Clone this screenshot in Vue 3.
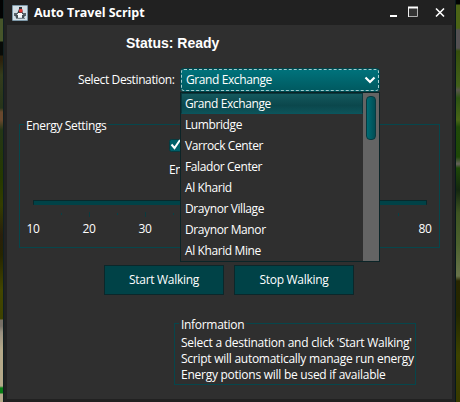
<script setup>
const destinations = [
  'Grand Exchange', 'Lumbridge', 'Varrock Center', 'Falador Center',
  'Al Kharid', 'Draynor Village', 'Draynor Manor', 'Al Kharid Mine',
]
const levels = [10, 20, 30, 80]
const info = [
  "Select a destination and click 'Start Walking'",
  'Script will automatically manage run energy',
  'Energy potions will be used if available',
]
</script>

<template>
  <div class="scene">
    <div class="edge left"></div>
    <div class="window">
      <header class="titlebar">
        <svg class="logo" width="16" height="16" viewBox="0 0 16 16">
          <rect width="16" height="16" rx="1" fill="#7d98a8" />
          <rect x="1" y="1" width="14" height="14" fill="#d3dfe6" />
          <path d="M2 8h3v3H2zM11 8h3v3h-3z" fill="#59636a" />
          <path d="M3 10h3v3H4zM10 10h3l-1 3h-2z" fill="#454e54" />
          <path d="M7 2h3v2l1 5H5l2-5z" fill="#30373c" />
          <path d="M6 8h4v4H6z" fill="#f7f9fa" />
          <rect x="7" y="4" width="3.500" height="3.500" rx="1" fill="#e03633" />
          <path d="M4 13.500h9" stroke="#7b878e" />
        </svg>
        <span class="title">Auto Travel Script</span>
        <svg class="controls" width="57" height="13" viewBox="0 0 57 13">
          <path d="M0 10h7" stroke="#fff" stroke-width="2" />
          <path d="M18.500 1v9.500h9V1" fill="#333" stroke="#b0b0b0" />
          <path d="M18.500 1v10" stroke="#eee" />
          <path d="M18 1.500h10" stroke="#fff" stroke-width="2" />
          <path d="M46 2.500l8 8M54 2.500l-8 8" stroke="#fff" stroke-width="1.600" />
        </svg>
      </header>
      <main class="content">
        <div class="status">Status: Ready</div>
        <div class="destination">
          <label class="caption">Select Destination:</label>
          <div class="combo">
            <div class="face">
              <span>Grand Exchange</span>
              <svg width="12" height="8" viewBox="0 0 12 8">
                <path d="M1.500 1.500L6 6l4.500-4.500" fill="none" stroke="#fff" stroke-width="2.200" />
              </svg>
            </div>
            <div class="popup">
              <ul>
                <li v-for="(name, i) in destinations" :key="name" :class="{ selected: i === 0 }">{{ name }}</li>
              </ul>
              <div class="scrollbar"><div class="thumb"></div></div>
            </div>
          </div>
        </div>
        <section class="group energy">
          <h2>Energy Settings</h2>
          <div class="check">
            <svg width="13" height="13" viewBox="0 0 13 13">
              <rect x=".5" y=".5" width="12" height="12" rx="2" fill="#006069" stroke="#073a3f" />
              <path d="M2.500 5.500l3 3.500L11 1" fill="none" stroke="#fff" stroke-width="2" />
            </svg>
          </div>
          <div class="threshold">En</div>
          <div class="track"></div>
          <svg class="ticks" width="394" height="6" viewBox="0 0 394 6">
            <path d="M28.500 1v2M84.500 1v2M140.500 1v2M365.500 1v3" stroke="#074146" />
            <path d="M56.500 0v5M112.500 0v5" stroke="#0b3b40" />
          </svg>
          <div class="levels"><span v-for="level in levels" :key="level">{{ level }}</span></div>
        </section>
        <div class="buttons">
          <button>Start Walking</button>
          <button>Stop Walking</button>
        </div>
        <section class="group information">
          <h2>Information</h2>
          <p v-for="line in info" :key="line">{{ line }}</p>
        </section>
      </main>
    </div>
    <div class="edge right"></div>
  </div>
</template>

<style>
body { background: #101810; overflow: hidden; }
</style>

<style scoped>
* { box-sizing: border-box; margin: 0; padding: 0; }
svg { display: block; flex: none; }
.scene { display: flex; width: 460px; height: 402px; overflow: hidden; color: #fff; font: 12px/16px "Open Sans", "Noto Sans", sans-serif; letter-spacing: -.3px; white-space: nowrap; }
.edge.left { width: 3px; background: linear-gradient(#020303 0 18px, #46552a 19px 41px, #080b08 42px 55px, #2c210c 56px 60px, #343c1c 75px, #26341a 108px, #68482d 112px 120px, #243617 130px, #253900 178px, #343d00 205px, #291f0c 235px, #262500 255px, #434600 290px, #3e4200 319px, #777066 320px 326px, #999080 332px, #b5a989 350px, #b5a989 386px, #087c14 388px 393px, #b5a989 394px); }
.edge.right { width: 4px; background: linear-gradient(#020302 0 4px, #4c6416 5px 28px, #535052 30px 48px, #354e0c 51px, #42601a 86px, #58544b 90px, #2c5312 98px, #486517 120px, #204909 127px, #1e4808 157px, #66625b 164px, #1e4808 168px, #142710 190px, #3e5422 213px, #4c612e 245px, #68734a 276px, #282600 281px, #242800 315px, #3d4200 355px, #383900); }
.window { width: 453px; height: 402px; padding: 0 3px 3px; background: #212121; border-right: 1px solid #07191b; border-left: 1px solid #102022; }
.titlebar { height: 25px; display: flex; align-items: center; padding-left: 5px; }
.title { flex: 1; margin-left: 6px; font-size: 12.5px; font-weight: 700; letter-spacing: -.05px; }
.controls { margin-right: 5px; }
.content { height: 374px; padding: 10px 12px; background: #2f2f2f; }
.status { height: 17px; margin-left: 107px; font: bold 14px/17px "Liberation Sans", sans-serif; letter-spacing: 0; }
.destination { display: flex; align-items: center; height: 24px; margin-top: 16px; padding-left: 59px; }
.caption { width: 102px; letter-spacing: -.38px; }
.combo { position: relative; width: 200px; height: 24px; padding: 1px; border-radius: 4px; background: #00454b; letter-spacing: -.4px; }
.face { height: 22px; display: flex; align-items: center; justify-content: space-between; padding: 0 2px 0 4px; border: 1px dashed #a5cccf; border-radius: 3px; background: linear-gradient(#00727b, #005a61); }
.popup { position: absolute; left: 0; top: 24px; width: 200px; height: 170px; display: flex; border: 1px solid #0b2427; background: #2f2f2f; }
ul { flex: 1; list-style: none; }
li { height: 21px; padding-left: 4px; line-height: 22px; }
li.selected { border: 1px solid #08383e; border-bottom-color: #0a555d; padding-left: 3px; line-height: 20px; background: linear-gradient(#14595e, #0b474c 60%, #0d5359); }
.scrollbar { width: 16px; padding: 3px; background: #646464; }
.thumb { width: 10px; height: 44px; border: 1px solid #073a40; border-radius: 4px; background: linear-gradient(90deg, #006c75, #004d54); }
.group { border: 1px solid #06464c; }
.group h2 { width: max-content; margin-top: -8px; background: #2f2f2f; font: inherit; }
.energy { width: 421px; height: 124px; margin-top: 32px; }
.energy h2 { height: 16px; margin-left: 4px; padding: 0 2px; line-height: 18px; letter-spacing: -.36px; }
.check { margin: 6px 0 0 149px; }
.threshold { margin: 10px 0 0 149px; }
.track { width: 394px; height: 5px; margin: 22px 0 0 13px; border: 1px solid #08282b; border-bottom-width: 0; border-radius: 1px; background: #004247; }
.ticks { margin: 7px 0 0 13px; }
.levels { display: flex; width: 448px; margin: 3px 0 0 -15px; }
.levels span { flex: none; width: 56px; text-align: center; }
.levels span:last-child { margin-left: auto; }
.buttons { display: flex; gap: 10px; margin: 17px 0 0 85px; }
button { width: 120px; height: 30px; border: 1px solid #0b272a; background: #004247; color: inherit; font: inherit; letter-spacing: inherit; }
.information { width: 242px; height: 62px; margin: 28px 0 0 155px; }
.information h2 { margin-left: 4px; padding: 0 2px; line-height: 18px; }
.information p { height: 16px; padding: 1px 0 0 6px; letter-spacing: -.26px; }
</style>
